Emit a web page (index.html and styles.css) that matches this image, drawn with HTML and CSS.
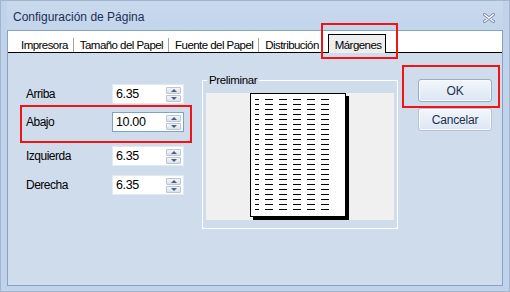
FILE: index.html
```html
<!DOCTYPE html>
<html lang="es">
<head>
  <meta charset="UTF-8">
  <title>Configuración de Página</title>
  <link rel="stylesheet" href="styles.css">
</head>
<body>
  <div class="window">
    <div class="titlebar">
      <span class="title">Configuración de Página</span>
      <svg class="close" width="12" height="10" viewBox="0 0 12 10">
        <path d="M1.5 1.5 L10.5 8.5 M10.5 1.5 L1.5 8.5" stroke="#7d8ea8" stroke-width="3" stroke-linecap="round"/>
        <path d="M1.5 1.5 L10.5 8.5 M10.5 1.5 L1.5 8.5" stroke="#ffffff" stroke-width="1.2" stroke-linecap="round"/>
      </svg>
    </div>

    <div class="panel">
      <div class="tabs">
        <span class="tab first">Impresora</span>
        <span class="tab">Tamaño del Papel</span>
        <span class="tab">Fuente del Papel</span>
        <span class="tab last">Distribución</span>
        <span class="tab active">Márgenes</span>
      </div>

      <div class="content">
        <div class="fields">
          <div class="row">
            <label>Arriba</label>
            <div class="spin"><span class="value">6.35</span><span class="arrows"><span class="up"></span><span class="down"></span></span></div>
          </div>
          <div class="row r2">
            <label>Abajo</label>
            <div class="spin focus"><span class="value">10.00</span><span class="arrows"><span class="up"></span><span class="down"></span></span></div>
          </div>
          <div class="row r3">
            <label>Izquierda</label>
            <div class="spin"><span class="value">6.35</span><span class="arrows"><span class="up"></span><span class="down"></span></span></div>
          </div>
          <div class="row r4">
            <label>Derecha</label>
            <div class="spin"><span class="value">6.35</span><span class="arrows"><span class="up"></span><span class="down"></span></span></div>
          </div>
        </div>

        <fieldset class="group">
          <legend>Preliminar</legend>
          <div class="preview">
            <div class="sheet">
              <svg width="94" height="122" viewBox="0 0 94 122">
                <defs>
                  <pattern id="lines" width="14" height="5" patternUnits="userSpaceOnUse">
                    <rect x="0" y="0" width="8" height="1" fill="#000"/>
                  </pattern>
                </defs>
                <rect x="4" y="3" width="78" height="116" fill="url(#lines)"/>
              </svg>
            </div>
          </div>
        </fieldset>

        <div class="buttons">
          <button class="btn default">OK</button>
          <button class="btn">Cancelar</button>
        </div>
      </div>
    </div>
  </div>

  <!-- red annotation boxes -->
  <div class="mark mark-tab"></div>
  <div class="mark mark-ok"></div>
  <div class="mark mark-field"></div>
</body>
</html>
```

FILE: styles.css
```css
* {
  box-sizing: border-box;
}
body {
  margin: 0;
  width: 510px;
  height: 292px;
  position: relative;
  font-family: "Liberation Sans", Arial, sans-serif;
  font-size: 11.5px;
  letter-spacing: -0.35px;
  color: #000;
  background: #c1d3ea;
}
.window {
  width: 510px;
  height: 292px;
  border: 1px solid #a3b5cd;
  padding: 0 6px 5px 6px;
  background: #c1d3ea;
  display: flex;
  flex-direction: column;
}
.titlebar {
  height: 29px;
  display: flex;
  justify-content: space-between;
  align-items: flex-start;
  background: linear-gradient(#c9d9ee, #c3d5eb);
}
.title {
  font-size: 12px;
  letter-spacing: 0;
  line-height: 15px;
  padding: 9px 0 0 6px;
  color: #1b3151;
}
.close {
  margin: 12px 8px 0 0;
}
.panel {
  flex: 1;
  border: 1px solid #8aa2c2;
  background: #cfdcec;
  display: flex;
  flex-direction: column;
}
.tabs {
  height: 22px;
  background: #fff;
  border-bottom: 1px solid #000;
  display: flex;
  align-items: flex-end;
  padding-left: 8px;
  font-size: 11.5px;
  letter-spacing: -0.55px;
}
.tab {
  line-height: 14px;
  padding: 0 5px 0 6px;
  border-right: 1px solid #aaa393;
  white-space: nowrap;
}
.tab.first {
  padding-left: 5px;
}
.tab.last {
  border-right: none;
  padding-right: 9px;
}
.tab.active {
  background: #eeeeee;
  border: 1px solid #000;
  border-bottom: none;
  padding: 3px 4px 1px 6px;
  margin-bottom: -1px;
}
.content {
  display: flex;
  align-items: flex-start;
  padding-left: 18px;
}
.fields {
  margin-top: 31px;
  width: 158px;
}
.row {
  display: flex;
  align-items: center;
  height: 20px;
}
.row.r2 {
  margin-top: 8px;
}
.row.r3 {
  margin-top: 14px;
}
.row.r4 {
  margin-top: 9px;
}
.row label {
  width: 86px;
  font-size: 12px;
  letter-spacing: -0.5px;
}
.spin {
  width: 72px;
  height: 20px;
  background: #fff;
  border: 1px solid #e3e9f0;
  display: flex;
  align-items: center;
  justify-content: space-between;
  padding: 0 2px 0 3px;
}
.spin.focus {
  border-color: #7da2ce;
}
.value {
  font-size: 12.5px;
}
.arrows {
  width: 15px;
  display: flex;
  flex-direction: column;
  gap: 1px;
}
.arrows span {
  height: 7px;
  border: 1px solid #bcc6d3;
  border-radius: 1px;
  background: linear-gradient(#f3f6fa, #dbe2eb);
  display: flex;
  justify-content: center;
  align-items: center;
}
.arrows .up::after {
  content: "";
  border-left: 3px solid transparent;
  border-right: 3px solid transparent;
  border-bottom: 3px solid #4b5f86;
}
.arrows .down::after {
  content: "";
  border-left: 3px solid transparent;
  border-right: 3px solid transparent;
  border-top: 3px solid #4b5f86;
}
.group {
  margin: 20px 0 0 18px;
  border: 1px solid #fff;
  padding: 6px 3px 8px 3px;
  min-width: 0;
}
.group legend {
  line-height: 14px;
  padding: 0 2px;
  margin-left: 1px;
}
.preview {
  width: 188px;
  height: 127px;
  background: #f0f0f0;
  padding-left: 44px;
}
.sheet {
  width: 96px;
  height: 124px;
  background: #fff;
  border: 1px solid #000;
  box-shadow: 3px 3px 0 #000;
}
.sheet svg {
  display: block;
}
.buttons {
  margin: 26px 0 0 20px;
  display: flex;
  flex-direction: column;
  gap: 6px;
}
.btn {
  width: 74px;
  height: 23px;
  font-family: inherit;
  font-size: 12px;
  letter-spacing: -0.2px;
  color: #1b3151;
  border: 1px solid #b3c2d6;
  border-radius: 3px;
  background: linear-gradient(#f3f7fc, #dce6f3);
  box-shadow: inset 0 0 0 1px #f7faff;
  padding: 0;
}
.btn.default {
  border-color: #98adc8;
}
.mark {
  position: absolute;
  border: 2px solid #f01414;
}
.mark-tab {
  left: 321px;
  top: 23px;
  width: 77px;
  height: 36px;
}
.mark-ok {
  left: 402px;
  top: 65px;
  width: 98px;
  height: 43px;
}
.mark-field {
  left: 20px;
  top: 105px;
  width: 172px;
  height: 38px;
}
```
